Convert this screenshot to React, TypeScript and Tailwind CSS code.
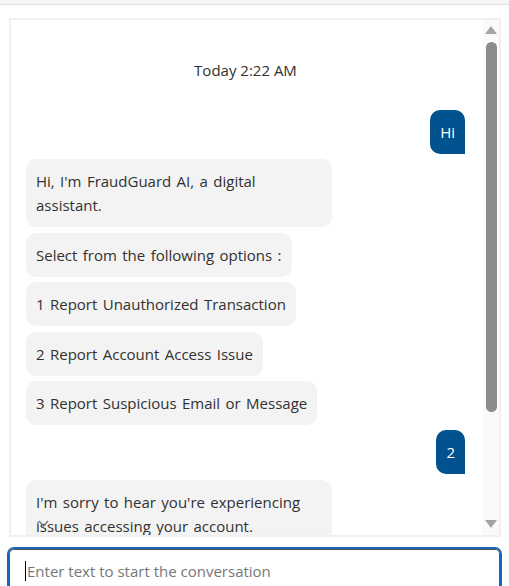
import React from "react";

type Msg = { from: "bot" | "user"; text: string };

const messages: Msg[] = [
  { from: "user", text: "Hi" },
  { from: "bot", text: "Hi, I'm FraudGuard AI, a digital assistant." },
  { from: "bot", text: "Select from the following options :" },
  { from: "bot", text: "1 Report Unauthorized Transaction" },
  { from: "bot", text: "2 Report Account Access Issue" },
  { from: "bot", text: "3 Report Suspicious Email or Message" },
  { from: "user", text: "2" },
  {
    from: "bot",
    text: "I'm sorry to hear you're experiencing issues accessing your account.",
  },
];

export default function App() {
  return (
    <div
      className="w-[509px] h-[586px] overflow-hidden bg-white text-[#323130]"
      style={{ fontFamily: '"Open Sans", "Noto Sans", sans-serif' }}
    >
      {/* top strip */}
      <div className="h-[5px] bg-[#f5f5f7] border-b border-[#e1e1e1]" />

      {/* chat panel */}
      <div className="ml-[9px] mt-[13px] w-[492px] h-[519px] border-2 border-[#f0f0f0] flex relative">
        <div className="flex-1 overflow-hidden pl-[15px] pr-[18px] pt-[38px] flex flex-col gap-[5.4px]">
          <div className="text-center text-[15px] leading-[24px] mb-[22.6px]">
            Today 2:22 AM
          </div>
          {messages.map((m, i) =>
            m.from === "user" ? (
              <div key={i} className="flex justify-end">
                <div className="bg-[#01528f] text-white text-[15px] leading-[24px] px-[10px] py-[10px] rounded-[10px] rounded-br-none">
                  {m.text}
                </div>
              </div>
            ) : (
              <div key={i} className="flex justify-start">
                <div className="bg-[#f3f3f3] text-[15px] leading-[24px] [word-spacing:1.5px] px-[10px] py-[10px] rounded-[10px] max-w-[306px]">
                  {m.text}
                </div>
              </div>
            )
          )}
        </div>

        {/* scroll to bottom chevron */}
        <svg
          className="absolute left-[27px] top-[500px]"
          width="11"
          height="8"
          viewBox="0 0 11 8"
          fill="none"
        >
          <path d="M1 1 L5.5 6 L10 1" stroke="#777" strokeWidth="1.4" />
        </svg>

        {/* scrollbar */}
        <div className="w-[16px] bg-[#fafafa] flex flex-col items-center pt-[6px] pb-[7px]">
          <svg width="12" height="8" viewBox="0 0 12 8">
            <path d="M6 0 L12 8 L0 8 Z" fill="#a3a3a3" />
          </svg>
          <div className="mt-[8px] w-[11px] h-[370px] rounded-full bg-[#8c8c8c]" />
          <div className="flex-1" />
          <svg width="12" height="8" viewBox="0 0 12 8">
            <path d="M0 0 L12 0 L6 8 Z" fill="#a3a3a3" />
          </svg>
        </div>
      </div>

      {/* input */}
      <div className="ml-[7px] mt-[10px] w-[495px] h-[50px] rounded-[7px] border-2 border-[#1a66b8]">
        <div className="h-full rounded-[5px] border border-[#555] flex items-start pl-[15px] pt-[11px]">
          <span className="w-px h-[20px] bg-black mr-[1px]" />
          <span className="text-[15px] leading-[20px] text-[#767676]">
            Enter text to start the conversation
          </span>
        </div>
      </div>
    </div>
  );
}
